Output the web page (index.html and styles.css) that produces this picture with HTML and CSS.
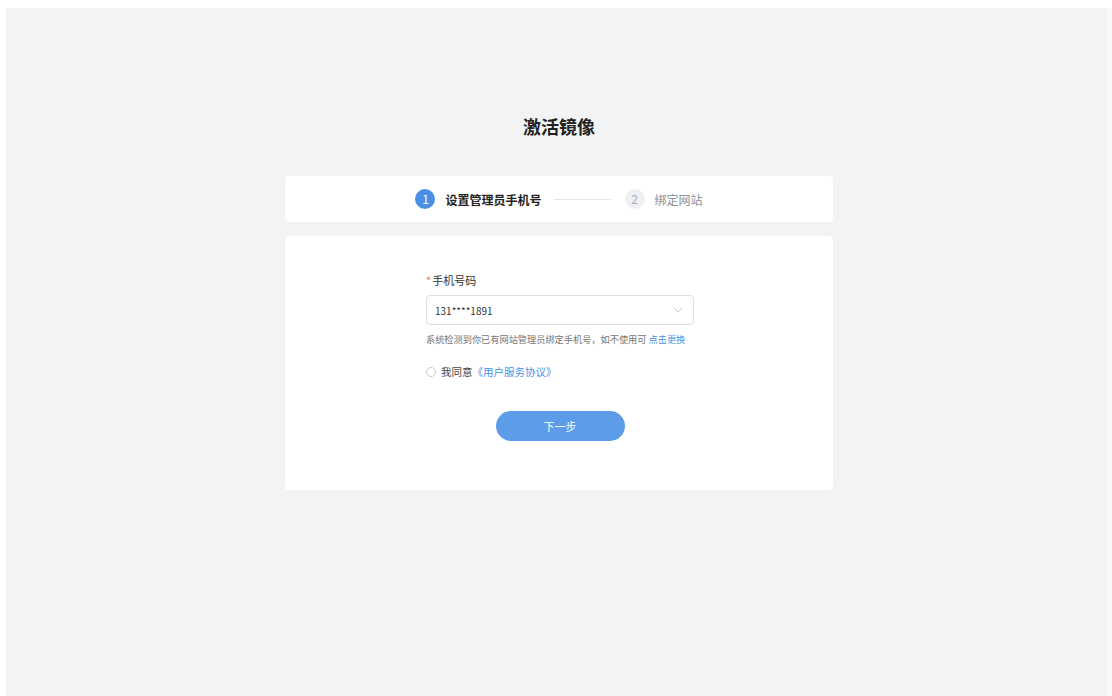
FILE: index.html
```html
<!DOCTYPE html>
<html lang="zh-CN">
<head>
<meta charset="utf-8">
<title>激活镜像</title>
<link rel="stylesheet" href="styles.css">
</head>
<body>
<div class="page">
  <h1 class="title">激活镜像</h1>

  <div class="card steps-card">
    <div class="steps">
      <div class="step active">
        <span class="step-num">1</span>
        <span class="step-label">设置管理员手机号</span>
      </div>
      <span class="step-line"></span>
      <div class="step">
        <span class="step-num">2</span>
        <span class="step-label">绑定网站</span>
      </div>
    </div>
  </div>

  <div class="card form-card">
    <form class="form">
      <label class="field-label"><span class="required">*</span>手机号码</label>
      <div class="select">
        <span class="select-value">131****1891</span>
        <svg class="select-arrow" width="10" height="6" viewBox="0 0 10 6"><path d="M1 1l4 4 4-4" fill="none" stroke="#c4c8cf" stroke-width="1"/></svg>
      </div>
      <p class="hint">系统检测到你已有网站管理员绑定手机号，如不使用可 <a class="link">点击更换</a></p>
      <div class="agree">
        <span class="radio"></span>
        <span>我同意</span><a class="link">《用户服务协议》</a>
      </div>
      <div class="actions">
        <button type="button" class="btn-primary">下一步</button>
      </div>
    </form>
  </div>
</div>
</body>
</html>
```

FILE: styles.css
```css
html, body {
  margin: 0;
  padding: 0;
  background: #ffffff;
  height: 100%;
}

body {
  font-family: "Noto Sans CJK SC", "Noto Sans", sans-serif;
  color: #333;
}

.page {
  margin: 8px 0 0 6px;
  min-height: 688px;
  background: linear-gradient(to left, #f7f8f9 5px, #f2f3f5 5px);
  padding-top: 105px;
  box-sizing: border-box;
}

.title {
  margin: 0 0 37px;
  text-align: center;
  font-size: 18px;
  line-height: 26px;
  font-weight: 700;
  color: #222;
}

.card {
  width: 548px;
  margin: 0 auto;
  background: #fff;
  border-radius: 4px;
}

.steps-card {
  height: 46px;
  display: flex;
  align-items: center;
  justify-content: center;
  margin-bottom: 14px;
}

.steps {
  display: flex;
  align-items: center;
}

.step {
  display: flex;
  align-items: center;
}

.step-num {
  width: 20px;
  height: 20px;
  border-radius: 50%;
  background: #eef0f3;
  color: #a8adb5;
  font-size: 12px;
  line-height: 20px;
  text-align: center;
  margin-right: 10px;
}

.step-label {
  font-size: 12px;
  color: #8a8f97;
}

.step.active .step-num {
  background: #4a8fe6;
  color: #fff;
}

.step.active .step-label {
  color: #222;
  font-weight: 700;
}

.step-line {
  width: 58px;
  height: 1px;
  background: #e4e7ec;
  margin: 0 13px 0 12px;
}

.form-card {
  padding: 36px 0 49px;
}

.form {
  width: 268px;
  margin: 0 auto;
  transform: translateX(1px);
}

.field-label {
  display: block;
  font-size: 11px;
  line-height: 16px;
  color: #333;
  margin-bottom: 7px;
}

.required {
  color: #f56c6c;
  margin-right: 1px;
}

.select {
  height: 30px;
  box-sizing: border-box;
  border: 1px solid #dcdfe6;
  border-radius: 4px;
  display: flex;
  align-items: center;
  justify-content: space-between;
  padding: 0 10px 0 8px;
}

.select-value {
  font-size: 10px;
  color: #333;
}

.hint {
  margin: 7px 0 0;
  font-size: 9.2px;
  line-height: 14px;
  color: #777;
  white-space: nowrap;
}

.link {
  color: #4a8fe6;
  cursor: pointer;
}

.agree {
  margin-top: 18px;
  display: flex;
  align-items: center;
  font-size: 10.5px;
  line-height: 16px;
  color: #444;
}

.radio {
  width: 10px;
  height: 10px;
  border: 1px solid #c9ccd2;
  border-radius: 50%;
  margin-right: 5px;
  box-sizing: border-box;
}

.actions {
  margin-top: 31px;
  display: flex;
  justify-content: center;
}

.btn-primary {
  width: 129px;
  height: 30px;
  border: none;
  border-radius: 15px;
  background: #5d9ce8;
  color: #fff;
  font-family: inherit;
  font-size: 11px;
  cursor: pointer;
}
```
